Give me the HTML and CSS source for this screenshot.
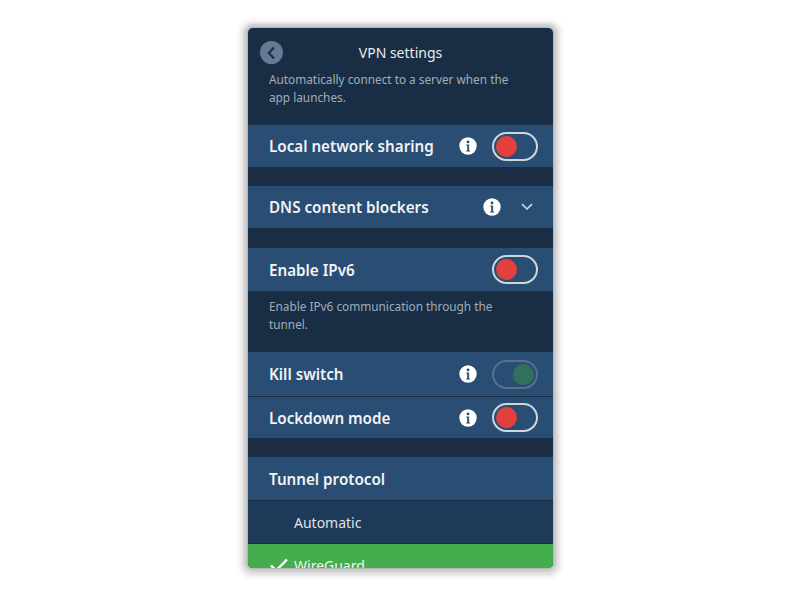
FILE: index.html
```html
<!DOCTYPE html>
<html lang="en">
<head>
<meta charset="utf-8">
<title>VPN settings</title>
<link rel="stylesheet" href="styles.css">
</head>
<body>
<main class="phone">
  <header class="nav">
    <span class="back"><svg width="22" height="22" viewBox="0 0 22 22"><path d="M13 5.5 7.8 11l5.2 5.5" fill="none" stroke="#192e45" stroke-width="2.2"/></svg></span>
    <h1 class="title">VPN settings</h1>
  </header>
  <p class="note note-top">Automatically connect to a server when the app launches.</p>

  <section class="row row-1">
    <span class="label">Local network sharing</span>
    <svg class="info" viewBox="0 0 18 18"><circle cx="9" cy="9" r="8.7" fill="#fff"/><circle cx="9" cy="4.9" r="1.4" fill="#294d73"/><path d="M7.2 7.4h2.9v6h1v1.2H7.2v-1.2h1v-4.8h-1z" fill="#294d73"/></svg>
    <span class="toggle"><span class="knob off"></span></span>
  </section>

  <section class="row row-2">
    <span class="label">DNS content blockers</span>
    <svg class="info" viewBox="0 0 18 18"><circle cx="9" cy="9" r="8.7" fill="#fff"/><circle cx="9" cy="4.9" r="1.4" fill="#294d73"/><path d="M7.2 7.4h2.9v6h1v1.2H7.2v-1.2h1v-4.8h-1z" fill="#294d73"/></svg>
    <svg class="chev" viewBox="0 0 12 8"><path d="M1 1.2 6 6l5-4.8" fill="none" stroke="#d3dae2" stroke-width="1.6"/></svg>
  </section>

  <section class="row row-3">
    <span class="label">Enable IPv6</span>
    <span class="toggle"><span class="knob off"></span></span>
  </section>
  <p class="note note-ipv6">Enable IPv6 communication through the tunnel.</p>

  <section class="row row-4">
    <span class="label">Kill switch</span>
    <svg class="info" viewBox="0 0 18 18"><circle cx="9" cy="9" r="8.7" fill="#fff"/><circle cx="9" cy="4.9" r="1.4" fill="#294d73"/><path d="M7.2 7.4h2.9v6h1v1.2H7.2v-1.2h1v-4.8h-1z" fill="#294d73"/></svg>
    <span class="toggle toggle-on"><span class="knob on"></span></span>
  </section>
  <section class="row row-5">
    <span class="label">Lockdown mode</span>
    <svg class="info" viewBox="0 0 18 18"><circle cx="9" cy="9" r="8.7" fill="#fff"/><circle cx="9" cy="4.9" r="1.4" fill="#294d73"/><path d="M7.2 7.4h2.9v6h1v1.2H7.2v-1.2h1v-4.8h-1z" fill="#294d73"/></svg>
    <span class="toggle"><span class="knob off"></span></span>
  </section>

  <section class="row row-6">
    <span class="label">Tunnel protocol</span>
  </section>
  <div class="option">Automatic</div>
  <div class="option option-sel">
    <svg class="check" viewBox="0 0 18 14"><path d="M1 7.5 6.2 12.5 17 1.5" fill="none" stroke="#fff" stroke-width="2.4"/></svg>
    <span>WireGuard</span>
  </div>
</main>
</body>
</html>
```
FILE: styles.css
```css
* { box-sizing: border-box; }
html, body { margin: 0; padding: 0; background: #fff; overflow: hidden; }
body { height: 597px; font-family: "Noto Sans", sans-serif; }
.phone {
  width: 305px;
  height: 540px;
  margin: 28px 0 0 248px;
  background: #192e45;
  border-radius: 5px;
  overflow: hidden;
  box-shadow: 0 0 1px 1px #b4b4b4, 0 0 2px 4px #cdcdcd, 0 1px 3px 7px #e4e4e4, 0 1px 4px 10px #f6f6f6;
  color: #fff;
}
.nav { position: relative; height: 42px; display: flex; justify-content: center; }
.back {
  position: absolute; left: 12px; top: 13px;
  width: 23px; height: 23px; border-radius: 50%;
  background: #647a94;
  display: flex; align-items: center; justify-content: center;
}
.title { margin: 0; font-size: 14px; font-weight: 400; line-height: 49px; color: #e9edf1; }
.note { margin: 0; padding: 0 32px 0 21px; font-size: 11.8px; line-height: 18px; color: #a2adba; }
.note-top { height: 55px; }
.note-ipv6 { height: 61px; padding-top: 6px; }
.row {
  display: flex; align-items: center;
  height: 42px;
  padding: 0 15px 0 21px;
  background: #294d73;
}
.row-2 { margin-top: 19px; }
.row-3 { margin-top: 20px; height: 43px; }
.row-4 { height: 44px; }
.row-5 { margin-top: 1px; height: 41px; }
.row-6 { margin-top: 19px; height: 43px; }
.label { flex: 1; font-size: 15.2px; font-weight: 600; color: #f1f3f6; }
.info { width: 18px; height: 18px; margin-right: 15px; flex: none; }
.toggle {
  width: 46px; height: 29px; flex: none;
  border: 2px solid #cfd6dd; border-radius: 15px;
  padding: 2px;
  display: flex;
}
.toggle-on { border-color: #56708f; justify-content: flex-end; }
.knob { width: 21px; height: 21px; border-radius: 50%; }
.off { background: #e2403c; }
.on { background: #33705c; }
.row-2 .info { margin-right: 20px; }
.chev { width: 12px; height: 8px; margin-right: 5px; flex: none; }
.option {
  position: relative;
  display: flex; align-items: center;
  height: 42px; margin-top: 1px;
  padding-left: 46px;
  background: #1f3a59;
  font-size: 14px;
  color: #dde2e8;
}
.option-sel { background: #44ad4d; color: #eef7ef; }
.check { position: absolute; left: 22px; top: 14px; width: 18px; height: 14px; }
```
